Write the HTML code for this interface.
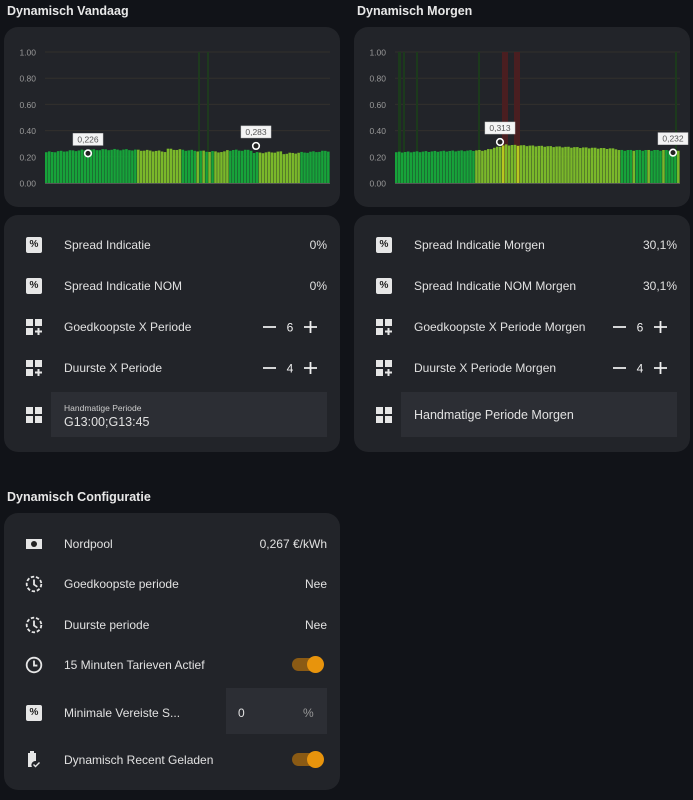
<!DOCTYPE html><html><head><meta charset="utf-8"><style>
body{margin:0;width:693px;height:800px;background:#111318;font-family:"Liberation Sans",sans-serif;color:#e1e1e1;position:relative;overflow:hidden}
.t{position:absolute;font-size:12.5px;font-weight:bold;color:#e8e8e8}
.card{position:absolute;background:#222429;border-radius:14px}
.a{position:absolute;font-size:12px;white-space:nowrap}
.r{text-align:right}
.ic{position:absolute;width:16px;height:16px}
.pc{background:#e6e6e6;border-radius:2px;color:#222;font-size:10px;font-weight:bold;text-align:center;line-height:16px}
.fld{position:absolute;background:#2c2e34}
.tg{position:absolute;width:30px;height:13px;border-radius:7px;background:#8a5a14}
.tg::after{content:"";position:absolute;right:-2px;top:-2px;width:17px;height:17px;border-radius:50%;background:#e8940c}
svg text{font-family:"Liberation Sans",sans-serif}
</style></head><body>
<div class="t" style="left:7px;top:4px">Dynamisch Vandaag</div>
<div class="t" style="left:357px;top:4px">Dynamisch Morgen</div>
<div class="card" style="left:4px;top:27px;width:336px;height:180px"></div>
<div class="card" style="left:354px;top:27px;width:336px;height:180px"></div>
<div class="card" style="left:4px;top:215px;width:336px;height:237px"></div>
<div class="card" style="left:354px;top:215px;width:336px;height:237px"></div>
<div class="t" style="left:7px;top:490px">Dynamisch Configuratie</div>
<div class="card" style="left:4px;top:513px;width:336px;height:277px"></div>
<svg id="c1" style="position:absolute;left:0;top:0" width="693" height="210"></svg>

<!-- left rows -->
<div class="ic pc" style="left:26px;top:237px">%</div><div class="a" style="left:64px;top:238px">Spread Indicatie</div><div class="a r" style="right:366px;top:238px">0%</div>
<div class="ic pc" style="left:26px;top:278px">%</div><div class="a" style="left:64px;top:279px">Spread Indicatie NOM</div><div class="a r" style="right:366px;top:279px">0%</div>
<svg class="ic" style="left:26px;top:319px" viewBox="0 0 16 16"><rect x="0" y="0" width="7" height="7" fill="#e6e6e6"/><rect x="9" y="0" width="7" height="7" fill="#e6e6e6"/><rect x="0" y="9" width="7" height="7" fill="#e6e6e6"/><path d="M12.5 9v7M9 12.5h7" stroke="#e6e6e6" stroke-width="2"/></svg>
<div class="a" style="left:64px;top:320px">Goedkoopste X Periode</div>
<svg class="ic" style="left:26px;top:360px" viewBox="0 0 16 16"><rect x="0" y="0" width="7" height="7" fill="#e6e6e6"/><rect x="9" y="0" width="7" height="7" fill="#e6e6e6"/><rect x="0" y="9" width="7" height="7" fill="#e6e6e6"/><path d="M12.5 9v7M9 12.5h7" stroke="#e6e6e6" stroke-width="2"/></svg>
<div class="a" style="left:64px;top:361px">Duurste X Periode</div>
<svg style="position:absolute;left:262px;top:320px" width="56" height="14"><path d="M1 7h13M42 7h13M48.5 1v12" stroke="#eee" stroke-width="1.8"/><text x="28" y="11.5" fill="#eee" font-size="12" text-anchor="middle">6</text></svg>
<svg style="position:absolute;left:262px;top:361px" width="56" height="14"><path d="M1 7h13M42 7h13M48.5 1v12" stroke="#eee" stroke-width="1.8"/><text x="28" y="11.5" fill="#eee" font-size="12" text-anchor="middle">4</text></svg>
<div class="fld" style="left:51px;top:392px;width:276px;height:45px"></div>
<svg class="ic" style="left:26px;top:407px" viewBox="0 0 16 16"><rect x="0" y="0" width="7" height="7" fill="#e6e6e6"/><rect x="9" y="0" width="7" height="7" fill="#e6e6e6"/><rect x="0" y="9" width="7" height="7" fill="#e6e6e6"/><rect x="9" y="9" width="7" height="7" fill="#e6e6e6"/></svg>
<div class="a" style="left:64px;top:403px;font-size:8.5px;color:#ccc">Handmatige Periode</div>
<div class="a" style="left:64px;top:415px;font-size:12.5px">G13:00;G13:45</div>

<!-- right rows -->
<div class="ic pc" style="left:376px;top:237px">%</div><div class="a" style="left:414px;top:238px">Spread Indicatie Morgen</div><div class="a r" style="right:16px;top:238px">30,1%</div>
<div class="ic pc" style="left:376px;top:278px">%</div><div class="a" style="left:414px;top:279px">Spread Indicatie NOM Morgen</div><div class="a r" style="right:16px;top:279px">30,1%</div>
<svg class="ic" style="left:376px;top:319px" viewBox="0 0 16 16"><rect x="0" y="0" width="7" height="7" fill="#e6e6e6"/><rect x="9" y="0" width="7" height="7" fill="#e6e6e6"/><rect x="0" y="9" width="7" height="7" fill="#e6e6e6"/><path d="M12.5 9v7M9 12.5h7" stroke="#e6e6e6" stroke-width="2"/></svg>
<div class="a" style="left:414px;top:320px">Goedkoopste X Periode Morgen</div>
<svg class="ic" style="left:376px;top:360px" viewBox="0 0 16 16"><rect x="0" y="0" width="7" height="7" fill="#e6e6e6"/><rect x="9" y="0" width="7" height="7" fill="#e6e6e6"/><rect x="0" y="9" width="7" height="7" fill="#e6e6e6"/><path d="M12.5 9v7M9 12.5h7" stroke="#e6e6e6" stroke-width="2"/></svg>
<div class="a" style="left:414px;top:361px">Duurste X Periode Morgen</div>
<svg style="position:absolute;left:612px;top:320px" width="56" height="14"><path d="M1 7h13M42 7h13M48.5 1v12" stroke="#eee" stroke-width="1.8"/><text x="28" y="11.5" fill="#eee" font-size="12" text-anchor="middle">6</text></svg>
<svg style="position:absolute;left:612px;top:361px" width="56" height="14"><path d="M1 7h13M42 7h13M48.5 1v12" stroke="#eee" stroke-width="1.8"/><text x="28" y="11.5" fill="#eee" font-size="12" text-anchor="middle">4</text></svg>
<div class="fld" style="left:401px;top:392px;width:276px;height:45px"></div>
<svg class="ic" style="left:376px;top:407px" viewBox="0 0 16 16"><rect x="0" y="0" width="7" height="7" fill="#e6e6e6"/><rect x="9" y="0" width="7" height="7" fill="#e6e6e6"/><rect x="0" y="9" width="7" height="7" fill="#e6e6e6"/><rect x="9" y="9" width="7" height="7" fill="#e6e6e6"/></svg>
<div class="a" style="left:414px;top:408px;font-size:12.5px">Handmatige Periode Morgen</div>

<!-- config -->
<svg class="ic" style="left:26px;top:536px" viewBox="0 0 16 16"><rect x="0" y="3" width="16" height="10" fill="#e6e6e6"/><circle cx="8" cy="8" r="3" fill="#222"/></svg>
<div class="a" style="left:64px;top:537px">Nordpool</div><div class="a r" style="right:366px;top:537px">0,267 €/kWh</div>
<svg class="ic" style="left:25px;top:575px;width:18px;height:18px" viewBox="0 0 16 16"><circle cx="8" cy="8" r="6.5" fill="none" stroke="#e6e6e6" stroke-width="1.6" stroke-dasharray="3 1.6"/><path d="M8 4v4.5l3 2" stroke="#e6e6e6" stroke-width="1.6" fill="none"/></svg>
<div class="a" style="left:64px;top:577px">Goedkoopste periode</div><div class="a r" style="right:366px;top:577px">Nee</div>
<svg class="ic" style="left:25px;top:616px;width:18px;height:18px" viewBox="0 0 16 16"><circle cx="8" cy="8" r="6.5" fill="none" stroke="#e6e6e6" stroke-width="1.6" stroke-dasharray="3 1.6"/><path d="M8 4v4.5l3 2" stroke="#e6e6e6" stroke-width="1.6" fill="none"/></svg>
<div class="a" style="left:64px;top:618px">Duurste periode</div><div class="a r" style="right:366px;top:618px">Nee</div>
<svg class="ic" style="left:25px;top:656px;width:18px;height:18px" viewBox="0 0 16 16"><circle cx="8" cy="8" r="6.5" fill="none" stroke="#e6e6e6" stroke-width="1.6"/><path d="M8 4v4.5h3" stroke="#e6e6e6" stroke-width="1.6" fill="none"/></svg>
<div class="a" style="left:64px;top:658px">15 Minuten Tarieven Actief</div><div class="tg" style="left:292px;top:658px"></div>
<div class="fld" style="left:226px;top:688px;width:101px;height:46px"></div>
<div class="a" style="left:238px;top:706px">0</div><div class="a" style="left:303px;top:706px;color:#999">%</div>
<div class="ic pc" style="left:26px;top:705px">%</div><div class="a" style="left:64px;top:706px">Minimale Vereiste S...</div>
<svg class="ic" style="left:27px;top:751px;width:14px;height:17px" viewBox="0 0 14 17"><path d="M3 0h4v2h2v8a4 4 0 0 0-4 6H1V2h2z" fill="#e6e6e6"/><path d="M6.5 13.5l2 2 4-4" stroke="#e6e6e6" stroke-width="1.4" fill="none"/></svg>
<div class="a" style="left:64px;top:753px">Dynamisch Recent Geladen</div><div class="tg" style="left:292px;top:753px"></div>
<script>
var s=document.getElementById('c1'),h='';
function chart(ox,vals,cols,extra,labels){
 var x0=ox+45,x1=ox+330;
 for(var i=0;i<=5;i++){var y=183-i*26.2;h+='<line x1="'+x0+'" x2="'+x1+'" y1="'+y+'" y2="'+y+'" stroke="#33302c" stroke-width="1"/>';
 h+='<text x="'+(ox+36)+'" y="'+(y+3.5)+'" fill="#999" font-size="8.5" text-anchor="end">'+(i*0.2).toFixed(2)+'</text>';}
 extra.forEach(function(e){h+='<rect x="'+(ox+e[0])+'" y="52" width="'+e[1]+'" height="131" fill="'+e[2]+'"/>';});
 var n=vals.length,w=(x1-x0)/n;
 for(var i=0;i<n;i++){var v=vals[i],y=183-v*131;h+='<rect x="'+(x0+i*w)+'" y="'+y+'" width="'+(w-0.4)+'" height="'+(183-y)+'" fill="'+cols[i]+'"/>';}
 h+='<line x1="'+x0+'" x2="'+x1+'" y1="183.5" y2="183.5" stroke="#555"/>';
 labels.forEach(function(l){var lx=ox+l[0],ly=183-l[1]*131;
  h+='<rect x="'+(lx-15)+'" y="'+(ly-20)+'" width="30" height="12" fill="#f4f4f4" stroke="#ccc" stroke-width=".5"/><text x="'+lx+'" y="'+(ly-11)+'" fill="#555" font-size="8.5" text-anchor="middle">'+l[2]+'</text><circle cx="'+lx+'" cy="'+ly+'" r="3.3" fill="#222" stroke="#fff" stroke-width="1.6"/>';});
}
var G='#17a33a',L='#7ab82a',Y='#b8c820';
var v1=[],c1=[];
for(var i=0;i<96;i++){var v=0.235+0.02*Math.sin(i/14)+(i>40&&i<70?0.02:0)+(i>60&&i<80?0.015:0)+0.005*Math.sin(i*1.7);v1.push(v);
 c1.push((i>=31&&i<=45)||(i>=57&&i<=61)||(i>=72&&i<=85)||(i>=50&&i<=55&&i%2)?L:G);}
chart(0,v1,c1,[[198,2,'#1e3a1e'],[207,2,'#1e3a1e']],[[88,0.226,'0,226'],[256,0.283,'0,283']]);
var v2=[],c2=[];
for(var i=0;i<96;i++){var v;if(i<30)v=0.235+i*0.0005;else if(i<38)v=0.25+(i-30)*0.006;else if(i<75)v=0.29-(i-38)*0.0008;else v=0.25;v+=0.004*Math.sin(i*2.1);v2.push(v);
 c2.push(i<27?G:(i<75?((i==36||i==41)?Y:L):(i%5==0?L:G)));}
chart(350,v2,c2,[[48,3,'#1c3a1c'],[53,2,'#1c3a1c'],[66,2,'#1c3a1c'],[128,2,'#1c3a1c'],[152,6,'#4a1e20'],[164,6,'#4a1e20'],[325,2,'#1c3a1c']],[[150,0.313,'0,313'],[323,0.232,'0,232']]);
s.innerHTML=h;
</script>
</body></html>
